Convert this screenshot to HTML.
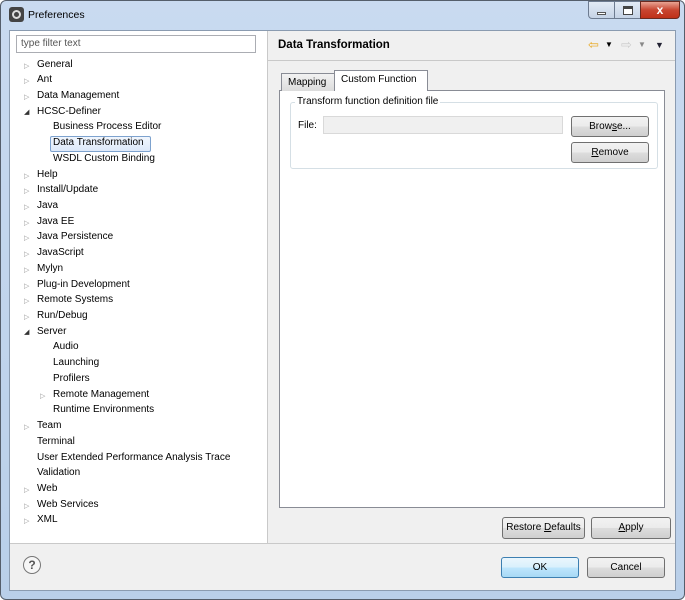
<!DOCTYPE html>
<html><head><style>
*{margin:0;padding:0;box-sizing:border-box}
body{width:685px;height:600px;overflow:hidden;background:#fff;font-family:"Liberation Sans",sans-serif;font-size:10px;color:#000;position:relative}
.a{position:absolute;white-space:nowrap}
.win{left:0;top:0;width:685px;height:600px;background:linear-gradient(#c9daf0,#b9cfe9);border:1px solid #555e6b;border-radius:6px}
.client{left:9px;top:30px;width:667px;height:561px;background:#f0f0f0;border:1px solid #8a9bb0}
.tree{left:10px;top:31px;width:257px;height:512px;background:#fff}
.t{position:absolute;white-space:nowrap;font-size:10px}
.arr{position:absolute;font-size:7px;color:#999}
.btn{position:absolute;white-space:nowrap;border:1px solid #707070;border-radius:3px;background:linear-gradient(#f2f2f2 0,#ebebeb 50%,#dddddd 51%,#cfcfcf 100%);text-align:center;font-size:10px;line-height:19px}
</style></head><body>
<div class="a win"></div>
<div class="a" style="left:9px;top:7px;width:15px;height:15px;border-radius:3px;background:#444;"><div style="margin:3px;width:9px;height:9px;border-radius:50%;border:2px solid #ddd"></div></div>
<div class="a" style="left:28px;top:9px;font-size:10.5px">Preferences</div>
<div class="a" style="left:588px;top:1px;width:27px;height:18px;border:1px solid #6d7b90;border-radius:0 0 0 4px;background:linear-gradient(#e3ebf5,#c5d3e6)"><div style="margin:10px auto 0;width:9px;height:3px;background:#fff;border:1px solid #555"></div></div>
<div class="a" style="left:614px;top:1px;width:27px;height:18px;border:1px solid #6d7b90;background:linear-gradient(#e3ebf5,#c5d3e6)"><div style="margin:4px auto 0;width:10px;height:9px;border:1px solid #444;border-top-width:3px;background:#fff"></div></div>
<div class="a" style="left:640px;top:1px;width:40px;height:18px;border:1px solid #6b2a20;border-radius:0 0 4px 0;background:linear-gradient(#e8a493,#c84530 50%,#c03018);color:#fff;font-weight:bold;text-align:center;font-size:12px;line-height:16px">x</div>
<div class="a client"></div>
<div class="a tree"></div>
<div class="a" style="left:267px;top:31px;width:1px;height:512px;background:#c9c9c9"></div>
<div class="a" style="left:268px;top:31px;width:407px;height:512px;background:#f0f0f0"></div>
<div class="a" style="left:16px;top:35px;width:240px;height:18px;border:1px solid #abadb3;background:#fff;color:#555;padding-left:4px;line-height:16px">type filter text</div>
<div class="a" style="left:50px;top:136px;width:101px;height:16px;border:1px solid #7da2ce;border-radius:2px;background:linear-gradient(#f1f6fd,#dde9f9)"></div>
<div id="tree"></div>
<script>
var items=[["General",0,"c"],["Ant",0,"c"],["Data Management",0,"c"],["HCSC-Definer",0,"o"],["Business Process Editor",1],["Data Transformation",1],["WSDL Custom Binding",1],["Help",0,"c"],["Install/Update",0,"c"],["Java",0,"c"],["Java EE",0,"c"],["Java Persistence",0,"c"],["JavaScript",0,"c"],["Mylyn",0,"c"],["Plug-in Development",0,"c"],["Remote Systems",0,"c"],["Run/Debug",0,"c"],["Server",0,"o"],["Audio",1],["Launching",1],["Profilers",1],["Remote Management",1,"c"],["Runtime Environments",1],["Team",0,"c"],["Terminal",0],["User Extended Performance Analysis Trace",0],["Validation",0],["Web",0,"c"],["Web Services",0,"c"],["XML",0,"c"]];
var h="";
items.forEach(function(it,i){var y=58.5+i*15.72;var x=37+it[1]*16;
h+='<div class="t" style="left:'+x+'px;top:'+y+'px">'+it[0]+'</div>';
if(it[2]=="c")h+='<div class="arr" style="left:'+(x-13)+'px;top:'+(y+3)+'px">&#9655;</div>';
if(it[2]=="o")h+='<div class="arr" style="left:'+(x-13)+'px;top:'+(y+2)+'px;color:#333">&#9698;</div>';});
document.getElementById("tree").innerHTML=h;
</script>
<div class="a" style="left:278px;top:39px;font-weight:bold;font-size:11.5px">Data Transformation</div>
<div class="a" style="left:588px;top:37px;color:#e8a820;font-size:13px">&#8678;</div>
<div class="a" style="left:605px;top:40px;font-size:8px">&#9660;</div>
<div class="a" style="left:621px;top:37px;color:#ccc;font-size:13px">&#8680;</div>
<div class="a" style="left:638px;top:40px;font-size:8px;color:#888">&#9660;</div>
<div class="a" style="left:655px;top:40px;font-size:9px;color:#223">&#9660;</div>
<div class="a" style="left:268px;top:60px;width:407px;height:1px;background:#c9c9c9"></div>
<div class="a" style="left:279px;top:90px;width:386px;height:418px;background:#fff;border:1px solid #898c95"></div>
<div class="a" style="left:281px;top:73px;width:54px;height:18px;border:1px solid #898c95;border-bottom:none;background:linear-gradient(#f2f2f2,#dcdcdc);padding:3px 0 0 6px">Mapping</div>
<div class="a" style="left:334px;top:70px;width:94px;height:21px;border:1px solid #898c95;border-bottom:none;background:#fff;padding:3px 0 0 6px">Custom Function</div>
<div class="a" style="left:290px;top:102px;width:368px;height:67px;border:1px solid #d5dfe5;border-radius:3px"></div>
<div class="a" style="left:295px;top:96px;background:#fff;padding:0 2px">Transform function definition file</div>
<div class="a" style="left:298px;top:120px">File:</div>
<div class="a" style="left:323px;top:116px;width:240px;height:18px;border:1px solid #d9d9d9;background:#f0f0f0"></div>
<div class="btn" style="left:571px;top:116px;width:78px;height:21px">Brow<u>s</u>e...</div>
<div class="btn" style="left:571px;top:142px;width:78px;height:21px"><u>R</u>emove</div>
<div class="btn" style="left:502px;top:517px;width:83px;height:22px;line-height:20px">Restore <u>D</u>efaults</div>
<div class="btn" style="left:591px;top:517px;width:80px;height:22px;line-height:20px"><u>A</u>pply</div>
<div class="a" style="left:10px;top:543px;width:665px;height:1px;background:#c9c9c9"></div>
<div class="a" style="left:23px;top:556px;width:18px;height:18px;border:1px solid #777;border-radius:50%;text-align:center;font-weight:bold;font-size:12px;line-height:16px;color:#555;background:#f6f6f6">?</div>
<div class="btn" style="left:501px;top:557px;width:78px;height:21px;border-color:#3c7fb1;background:linear-gradient(#eaf6fd,#d9f0fc 50%,#bee6fd 51%,#a7d9f5)">OK</div>
<div class="btn" style="left:587px;top:557px;width:78px;height:21px">Cancel</div>
</body></html>
